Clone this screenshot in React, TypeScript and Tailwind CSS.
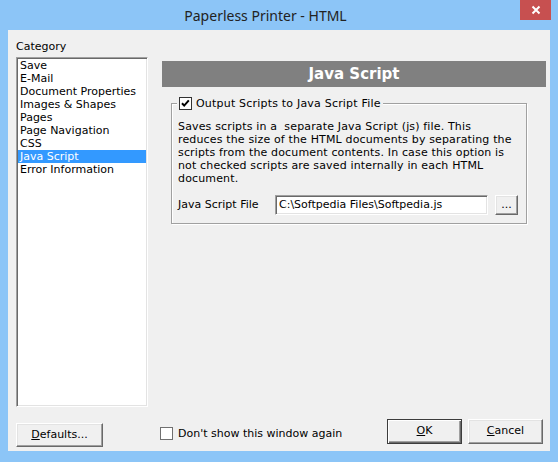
import React from "react";

const ui = { fontFamily: "'DejaVu Sans', 'Liberation Sans', sans-serif" };

const items = [
  "Save",
  "E-Mail",
  "Document Properties",
  "Images & Shapes",
  "Pages",
  "Page Navigation",
  "CSS",
  "Java Script",
  "Error Information",
];

const desc = [
  "Saves scripts in a  separate Java Script (js) file. This",
  "reduces the size of the HTML documents by separating the",
  "scripts from the document contents. In case this option is",
  "not checked scripts are saved internally in each HTML",
  "document.",
];

function Check({ checked }: { checked?: boolean }) {
  return (
    <div className="w-[13px] h-[13px] bg-white border border-[#333] flex items-center justify-center shrink-0">
      {checked && (
        <svg width="11" height="11" viewBox="0 0 11 11">
          <path d="M2 5.2 L4.2 7.6 L8.8 2.4" stroke="#000" strokeWidth="2" fill="none" />
        </svg>
      )}
    </div>
  );
}

function Btn({ children, className, def }: { children: React.ReactNode; className: string; def?: boolean }) {
  return (
    <div
      className={
        "flex items-center justify-center bg-[#f0f0f0] text-[11px] text-black " +
        (def
          ? "border border-[#3c3c3c] shadow-[inset_1px_1px_0_#fff,inset_-1px_-1px_0_#696969,inset_-2px_-2px_0_#a0a0a0] "
          : "border border-t-white border-l-white border-r-[#696969] border-b-[#696969] shadow-[inset_-1px_-1px_0_#a0a0a0,inset_1px_1px_0_#e3e3e3] ") +
        className
      }
    >
      {children}
    </div>
  );
}

export default function App() {
  return (
    <div className="w-[558px] h-[462px] bg-[#8cc5f7] relative overflow-hidden" style={ui}>
      {/* title bar */}
      <div className="h-[30px] flex items-center justify-center pr-[27px] pt-[1px]">
        <span className="text-[14px] text-[#222] leading-none" style={{ fontFamily: "'Noto Sans', 'Open Sans', sans-serif" }}>
          Paperless Printer - HTML
        </span>
      </div>
      <div className="absolute top-0 right-[7px] w-[31px] h-[20px] bg-[#c75050] flex items-center justify-center">
        <svg width="10" height="10" viewBox="0 0 10 10">
          <path d="M1.5 1.5 L8.5 8.5 M8.5 1.5 L1.5 8.5" stroke="#fff" strokeWidth="2" />
        </svg>
      </div>

      {/* client area */}
      <div className="mx-[8px] h-[421px] bg-[#f0f0f0] flex flex-col text-[11px] text-black">
        <div className="flex items-start h-[389px]">
          {/* left column */}
          <div className="pl-[8px] pt-[10px] flex flex-col">
            <div className="h-[13px] leading-[13px] mb-[4px]">Category</div>
            <div className="w-[132px] h-[350px] bg-white border border-t-[#a0a0a0] border-l-[#a0a0a0] border-r-white border-b-white shadow-[inset_1px_1px_0_#696969,inset_-1px_-1px_0_#e3e3e3] p-[1px] pt-[1px]">
              {items.map((it) => (
                <div
                  key={it}
                  className={
                    "h-[13px] leading-[13px] pl-[2px] whitespace-nowrap " +
                    (it === "Java Script" ? "bg-[#3399ff] text-white" : "")
                  }
                >
                  {it}
                </div>
              ))}
            </div>
          </div>

          {/* right column */}
          <div className="ml-[14px] mt-[31px] flex flex-col">
            <div className="w-[384px] h-[26px] bg-[#808080] flex items-center justify-center">
              <span className="text-white font-bold text-[15px] leading-none" style={{ fontFamily: "'DejaVu Sans', 'Liberation Sans', sans-serif" }}>
                Java Script
              </span>
            </div>

            <div className="relative ml-[9px] mt-[16px] w-[356px] h-[121px] border border-[#a0a0a0] shadow-[1px_1px_0_#fff,inset_1px_1px_0_#fff] pl-[6px] pt-[16px]">
              <div className="absolute -top-[7px] left-[5px] bg-[#f0f0f0] flex items-center pl-[2px] pr-[2px] h-[13px]">
                <Check checked />
                <span className="ml-[4px] leading-[13px] whitespace-nowrap tracking-[0.2px]">Output Scripts to Java Script File</span>
              </div>
              {desc.map((l, i) => (
                <div key={i} className="h-[13px] leading-[13px] whitespace-pre tracking-[0.15px]">
                  {l}
                </div>
              ))}
              <div className="flex items-center mt-[10px]">
                <div className="w-[97px] whitespace-nowrap">Java Script File</div>
                <div className="w-[213px] h-[20px] bg-white border border-t-[#a0a0a0] border-l-[#a0a0a0] border-r-white border-b-white shadow-[inset_1px_1px_0_#696969,inset_-1px_-1px_0_#e3e3e3] flex items-center pl-[3px] whitespace-nowrap">
                  C:\Softpedia Files\Softpedia.js
                </div>
                <Btn className="ml-[7px] w-[23px] h-[20px]">...</Btn>
              </div>
            </div>
          </div>
        </div>

        {/* bottom row */}
        <div className="flex items-start">
          <Btn className="ml-[8px] mt-[4px] w-[87px] h-[24px]">
            <span>
              <u>D</u>efaults...
            </span>
          </Btn>
          <div className="ml-[57px] mt-[8px] flex items-center">
            <div className="w-[13px] h-[13px] bg-white border border-[#707070]" />
            <span className="ml-[5px] leading-[13px] whitespace-nowrap">Don't show this window again</span>
          </div>
          <div className="ml-auto mr-[7px] flex">
            <Btn def className="w-[75px] h-[25px]">
              <span>
                <u>O</u>K
              </span>
            </Btn>
            <Btn className="ml-[6px] w-[75px] h-[25px]">
              <span>
                <u>C</u>ancel
              </span>
            </Btn>
          </div>
        </div>
      </div>
    </div>
  );
}
